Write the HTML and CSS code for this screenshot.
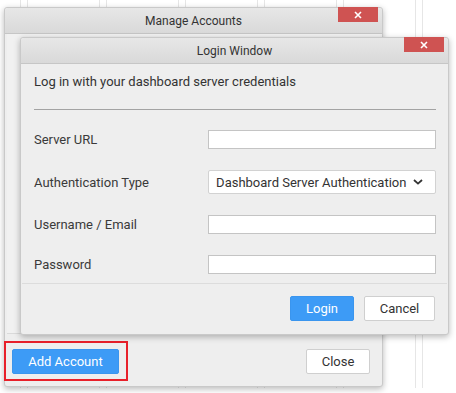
FILE: index.html
```html
<!DOCTYPE html>
<html lang="en">
<head>
    <meta charset="UTF-8">
    <meta name="viewport" content="width=device-width, initial-scale=1.0">
    <title>Manage Accounts</title>
    <link rel="stylesheet" href="styles.css">
</head>
<body>
    <div class="desk">
        <div class="dialog manage">
            <div class="dialog-header">
                <span class="dialog-title">Manage Accounts</span>
                <button class="close-x" aria-label="Close">
                    <svg width="8" height="8" viewBox="0 0 8 8"><path d="M1 1L7 7M7 1L1 7" stroke="#fff" stroke-width="1.6"/></svg>
                </button>
            </div>
            <div class="manage-body"></div>
            <div class="manage-footer">
                <div class="highlight">
                    <button class="btn btn-primary btn-add">Add Account</button>
                </div>
                <button class="btn btn-default btn-close">Close</button>
            </div>
        </div>

        <div class="dialog login">
            <div class="dialog-header">
                <span class="dialog-title">Login Window</span>
                <button class="close-x" aria-label="Close">
                    <svg width="8" height="8" viewBox="0 0 8 8"><path d="M1 1L7 7M7 1L1 7" stroke="#fff" stroke-width="1.6"/></svg>
                </button>
            </div>
            <div class="login-body">
                <p class="intro">Log in with your dashboard server credentials</p>
                <hr class="divider">
                <div class="form">
                    <div class="form-row">
                        <label>Server URL</label>
                        <input type="text" class="field">
                    </div>
                    <div class="form-row">
                        <label>Authentication Type</label>
                        <div class="select">
                            <span>Dashboard Server Authentication</span>
                            <svg width="10" height="6" viewBox="0 0 10 6"><path d="M1 1L5 4.6L9 1" fill="none" stroke="#333" stroke-width="1.8"/></svg>
                        </div>
                    </div>
                    <div class="form-row">
                        <label>Username / Email</label>
                        <input type="text" class="field">
                    </div>
                    <div class="form-row">
                        <label>Password</label>
                        <input type="password" class="field">
                    </div>
                </div>
            </div>
            <div class="login-footer">
                <button class="btn btn-primary btn-login">Login</button>
                <button class="btn btn-default btn-cancel">Cancel</button>
            </div>
        </div>
    </div>
</body>
</html>
```

FILE: styles.css
```css
* {
    margin: 0;
    padding: 0;
    box-sizing: border-box;
}

body {
    font-family: Roboto, 'Liberation Sans', sans-serif;
    color: #333;
    background: #fff;
    width: 456px;
    height: 393px;
    overflow: hidden;
}

.desk {
    position: relative;
    width: 456px;
    height: 393px;
    background-image: repeating-linear-gradient(90deg,
        transparent 0 20px, #e6e6e6 20px 21px,
        transparent 21px 27px, #e6e6e6 27px 28px,
        transparent 28px 79px);
    background-size: 100% 388px;
    background-repeat: no-repeat;
}

.dialog {
    position: absolute;
    display: flex;
    flex-direction: column;
    background: #eeeeee;
    border: 1px solid #c9c9c9;
    border-radius: 3px;
    box-shadow: 0 2px 6px rgba(0, 0, 0, 0.28);
}

.manage {
    left: 4px;
    top: 7px;
    width: 379px;
    height: 380px;
}

.login {
    left: 20px;
    top: 37px;
    width: 429px;
    height: 298px;
}

.dialog-header {
    position: relative;
    height: 26px;
    display: flex;
    align-items: center;
    justify-content: center;
    background: linear-gradient(#e7e7e7, #d9d9d9);
    border-bottom: 1px solid #c6c6c6;
    border-radius: 3px 3px 0 0;
    flex-shrink: 0;
}

.dialog-title {
    font-size: 12px;
    color: #333;
}

.close-x {
    position: absolute;
    top: -1px;
    right: 4px;
    width: 40px;
    height: 15px;
    border: none;
    background: #cf5352;
    display: flex;
    align-items: center;
    justify-content: center;
}

.manage-body {
    flex: 1;
    margin: 0 2px;
    background: #f1f1f1;
    border-bottom: 1px solid #dadada;
}

.manage-footer {
    display: flex;
    justify-content: space-between;
    align-items: center;
    padding: 7px 12px 5px 0;
}

.highlight {
    margin-left: -1px;
    padding: 6px 7px 5px 6px;
    border: 2px solid #e8202a;
}

.btn {
    display: block;
    height: 25px;
    font-family: Roboto, 'Liberation Sans', sans-serif;
    font-size: 13px;
    border-radius: 2px;
}

.btn-primary {
    background: #3d9bf6;
    color: #fff;
    border: 1px solid #3a95ee;
}

.btn-default {
    background: #fff;
    color: #333;
    border: 1px solid #cfcfcf;
}

.btn-add {
    width: 107px;
}

.btn-close {
    width: 64px;
}

.login-body {
    flex: 1;
    padding: 10px 12px 0 13px;
}

.intro {
    font-size: 13px;
    line-height: 15px;
}

.divider {
    border: none;
    border-top: 1px solid #a3a3a3;
    margin-top: 20px;
}

.form {
    display: flex;
    flex-direction: column;
    gap: 21px;
    margin-top: 20px;
}

.form-row {
    display: flex;
    align-items: center;
}

.form-row label {
    width: 175px;
    font-size: 13px;
    color: #3a3a3a;
}

.field {
    width: 229px;
    height: 19px;
    border: 1px solid #c4c4c4;
    background: #fff;
}

.select {
    width: 229px;
    height: 24px;
    display: flex;
    align-items: center;
    justify-content: space-between;
    padding: 0 12px 0 7px;
    border: 1px solid #d2d2d2;
    border-radius: 2px;
    background: #fff;
    font-size: 13px;
}

.login-footer {
    display: flex;
    justify-content: flex-end;
    gap: 10px;
    margin: 0 1px;
    padding: 12px 12px 13px;
    border-top: 1px solid #dcdcdc;
}

.btn-login {
    width: 64px;
}

.btn-cancel {
    width: 71px;
}
```
